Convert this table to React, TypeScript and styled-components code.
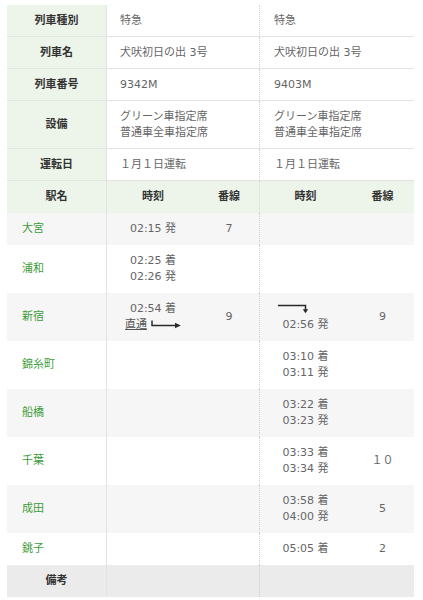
import React from "react";
import styled, { createGlobalStyle } from "styled-components";

const Global = createGlobalStyle`
  * { box-sizing: border-box; }
  html, body { margin: 0; padding: 0; background: #fff; }
  body {
    font-family: "DejaVu Sans", "Noto Sans CJK JP", sans-serif;
    font-size: 11px;
    color: #666;
  }
`;

const Page = styled.div`
  padding: 5px 9px 0 7px;
`;

const Table = styled.table`
  width: 407px;
  table-layout: fixed;
  border-collapse: separate;
  border-spacing: 0;
  line-height: 16px;
`;

const Col = styled.col<{ $w: number }>`
  width: ${(p) => p.$w}px;
`;

const InfoRow = styled.tr``;

const LabelCell = styled.th<{ $bg?: string; $last?: boolean }>`
  background: ${(p) => p.$bg || "#edf5ea"};
  color: #333;
  font-weight: bold;
  text-align: center;
  padding: 8px 4px ${(p) => (p.$last ? 8 : 7)}px;
  border-bottom: ${(p) => (p.$last ? "none" : "1px solid #e1e6e0")};
  border-right: 1px solid #e2e2e2;
  vertical-align: middle;
`;

const InfoCell = styled.td<{ $right?: boolean }>`
  padding: 8px 14px 7px ${(p) => (p.$right ? 14 : 13)}px;
  text-align: left;
  border-bottom: 1px solid #e3e3e3;
  border-left: ${(p) => (p.$right ? "1px dotted #cfcfcf" : "none")};
  vertical-align: middle;
`;

const HeadRow = styled.tr`
  background: #edf5ea;
`;

const HeadCell = styled.th<{ $right?: boolean; $label?: boolean }>`
  color: #333;
  font-weight: bold;
  text-align: center;
  padding: 8px 2px;
  border-left: ${(p) => (p.$right ? "1px dotted #d4dcd2" : "none")};
  border-right: ${(p) => (p.$label ? "1px solid #e2e2e2" : "none")};
`;

const StationRow = styled.tr<{ $alt?: boolean }>`
  background: ${(p) => (p.$alt ? "#f6f6f6" : "#fff")};
`;

const StationName = styled.td`
  color: #3d9c3a;
  padding: 8px 15px;
  border-right: 1px solid #e2e2e2;
  vertical-align: middle;
`;

const TimeCell = styled.td<{ $right?: boolean }>`
  text-align: center;
  padding: 8px 0;
  vertical-align: middle;
  border-left: ${(p) => (p.$right ? "1px dotted #cfcfcf" : "none")};
  white-space: nowrap;
`;

const TrackCell = styled.td`
  text-align: center;
  padding: 8px 0;
  vertical-align: middle;
`;

const Line = styled.div`
  height: 16px;
`;

const ThroughLink = styled.span`
  color: #555;
  text-decoration: underline;
`;

const ArrowRight = styled.svg`
  vertical-align: -1px;
  margin-left: 4px;
`;

const ArrowDown = styled.svg`
  display: block;
  margin: 0 auto;
`;

const NoteRow = styled.tr`
  background: #ebebeb;
`;

const NoteCell = styled.td<{ $right?: boolean }>`
  padding: 8px;
  border-left: ${(p) => (p.$right ? "1px dotted #cfcfcf" : "none")};
`;

type Stop = {
  name: string;
  a?: React.ReactNode;
  at?: string;
  b?: React.ReactNode;
  bt?: string;
};

const lines = (arr: string[]) => arr.map((t, i) => <Line key={i}>{t}</Line>);

const RightArrow = () => (
  <ArrowRight width="30" height="9" viewBox="0 0 30 9">
    <path d="M1 0.5 V5.5 H25" stroke="#2a2a2a" strokeWidth="1.5" fill="none" />
    <polygon points="24,2.8 29.8,5.5 24,8.2" fill="#2a2a2a" />
  </ArrowRight>
);

const DownArrow = () => (
  <ArrowDown width="55" height="16" viewBox="0 0 55 16">
    <path d="M0 4.5 H27.5 V9" stroke="#2a2a2a" strokeWidth="1.5" fill="none" />
    <polygon points="24.8,8.3 30.2,8.3 27.5,12.3" fill="#2a2a2a" />
  </ArrowDown>
);

const stops: Stop[] = [
  { name: "大宮", a: lines(["02:15 発"]), at: "7" },
  { name: "浦和", a: lines(["02:25 着", "02:26 発"]) },
  {
    name: "新宿",
    a: (
      <>
        <Line>02:54 着</Line>
        <Line>
          <ThroughLink>直通</ThroughLink>
          <RightArrow />
        </Line>
      </>
    ),
    at: "9",
    b: (
      <>
        <Line>
          <DownArrow />
        </Line>
        <Line>02:56 発</Line>
      </>
    ),
    bt: "9",
  },
  { name: "錦糸町", b: lines(["03:10 着", "03:11 発"]) },
  { name: "船橋", b: lines(["03:22 着", "03:23 発"]) },
  { name: "千葉", b: lines(["03:33 着", "03:34 発"]), bt: "１０" },
  { name: "成田", b: lines(["03:58 着", "04:00 発"]), bt: "5" },
  { name: "銚子", b: lines(["05:05 着"]), bt: "2" },
];

const info: [string, React.ReactNode, React.ReactNode][] = [
  ["列車種別", "特急", "特急"],
  ["列車名", "犬吠初日の出 3号", "犬吠初日の出 3号"],
  ["列車番号", "9342M", "9403M"],
  [
    "設備",
    lines(["グリーン車指定席", "普通車全車指定席"]),
    lines(["グリーン車指定席", "普通車全車指定席"]),
  ],
  ["運転日", "１月１日運転", "１月１日運転"],
];

export default function App() {
  return (
    <Page>
      <Global />
      <Table>
        <colgroup>
          <Col $w={100} />
          <Col $w={92} />
          <Col $w={60} />
          <Col $w={92} />
          <Col $w={63} />
        </colgroup>
        <tbody>
          {info.map(([label, a, b]) => (
            <InfoRow key={label}>
              <LabelCell>{label}</LabelCell>
              <InfoCell colSpan={2}>{a}</InfoCell>
              <InfoCell colSpan={2} $right>
                {b}
              </InfoCell>
            </InfoRow>
          ))}
          <HeadRow>
            <HeadCell $label>駅名</HeadCell>
            <HeadCell>時刻</HeadCell>
            <HeadCell>番線</HeadCell>
            <HeadCell $right>時刻</HeadCell>
            <HeadCell>番線</HeadCell>
          </HeadRow>
          {stops.map((s, i) => (
            <StationRow key={s.name} $alt={i % 2 === 0}>
              <StationName>{s.name}</StationName>
              <TimeCell>{s.a}</TimeCell>
              <TrackCell>{s.at}</TrackCell>
              <TimeCell $right>{s.b}</TimeCell>
              <TrackCell>{s.bt}</TrackCell>
            </StationRow>
          ))}
          <NoteRow>
            <LabelCell $bg="#ebebeb" $last>
              備考
            </LabelCell>
            <NoteCell colSpan={2} />
            <NoteCell colSpan={2} $right />
          </NoteRow>
        </tbody>
      </Table>
    </Page>
  );
}
